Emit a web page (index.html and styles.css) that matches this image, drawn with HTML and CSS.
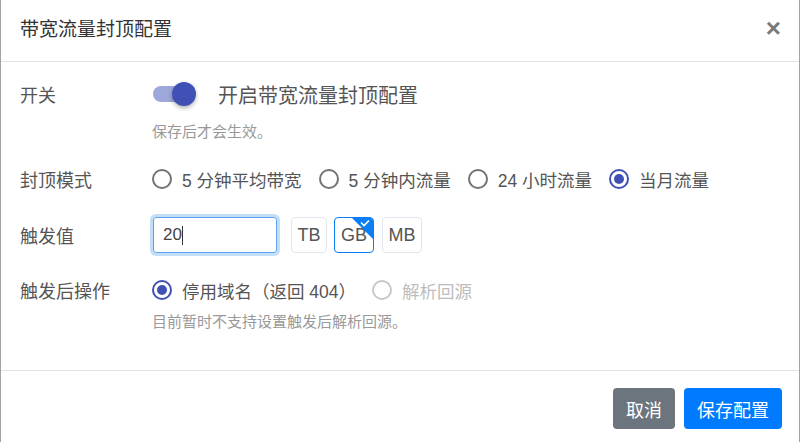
FILE: index.html
```html
<!DOCTYPE html>
<html lang="zh-CN">
<head>
    <meta charset="UTF-8">
    <title>带宽流量封顶配置</title>
    <link rel="stylesheet" href="styles.css">
</head>
<body>
    <div class="modal">
        <div class="modal-header">
            <h4 class="modal-title">带宽流量封顶配置</h4>
            <span class="close">&times;</span>
        </div>

        <div class="modal-body">
            <div class="row row-switch">
                <div class="label">开关</div>
                <div class="field">
                    <span class="switch"><span class="knob"></span></span>
                    <span class="switch-text">开启带宽流量封顶配置</span>
                </div>
            </div>
            <div class="hint hint-switch">保存后才会生效。</div>

            <div class="row row-mode">
                <div class="label">封顶模式</div>
                <div class="field">
                    <label class="radio"><span class="dot"></span>5 分钟平均带宽</label>
                    <label class="radio"><span class="dot"></span>5 分钟内流量</label>
                    <label class="radio"><span class="dot"></span>24 小时流量</label>
                    <label class="radio checked"><span class="dot"></span>当月流量</label>
                </div>
            </div>

            <div class="row row-value">
                <div class="label">触发值</div>
                <div class="field">
                    <div class="input">20<span class="caret"></span></div>
                    <span class="unit unit-tb">TB</span>
                    <span class="unit active">GB
                        <svg class="corner" width="21" height="21" viewBox="0 0 21 21">
                            <polygon points="0,0 21,0 21,21" fill="#0a7ff5"/>
                            <polyline points="9,4.5 12,7.5 17,2.5" fill="none" stroke="#fff" stroke-width="1.6"/>
                        </svg>
                    </span>
                    <span class="unit">MB</span>
                </div>
            </div>

            <div class="row row-action">
                <div class="label">触发后操作</div>
                <div class="field">
                    <label class="radio checked"><span class="dot"></span>停用域名（返回 404）</label>
                    <label class="radio disabled"><span class="dot"></span>解析回源</label>
                </div>
            </div>
            <div class="hint hint-action">目前暂时不支持设置触发后解析回源。</div>
        </div>

        <div class="modal-footer">
            <button class="btn btn-gray">取消</button>
            <button class="btn btn-blue">保存配置</button>
        </div>
    </div>
</body>
</html>
```

FILE: styles.css
```css
body {
    margin: 0;
    font-family: "Liberation Sans", "Noto Sans CJK SC", sans-serif;
    background-color: #ffffff;
    color: #555;
}

.modal {
    width: 800px;
    height: 442px;
    box-sizing: border-box;
    border-left: 1px solid #a3a3a3;
    border-right: 1px solid #a3a3a3;
    background-color: #fff;
}

.modal-header {
    height: 61px;
    border-bottom: 1px solid #e2e2e2;
    display: flex;
    align-items: center;
    justify-content: space-between;
    padding: 0 18px 0 19px;
}
.modal-title {
    margin: 0;
    font-size: 19px;
    font-weight: normal;
    color: #333;
    padding-bottom: 6px;
}
.close {
    font-size: 26px;
    font-weight: bold;
    color: #7a7a7a;
    padding-bottom: 4px;
}

.modal-body {
    height: 308px;
    box-sizing: border-box;
    padding: 16px 19px 0 19px;
}

.row {
    display: flex;
    align-items: center;
    height: 32px;
}
.label {
    width: 132px;
    flex-shrink: 0;
    font-size: 18px;
    color: #555;
}
.field {
    display: flex;
    align-items: center;
}

.hint {
    padding-left: 132px;
    font-size: 15px;
    line-height: 20px;
    color: #999;
}
.hint-switch { margin-top: 12px; }
.row-mode { margin-top: 21px; }
.row-value { margin-top: 22px; height: 36px; }
.row-action { margin-top: 21px; }
.hint-action { margin-top: 6px; }

/* switch */
.switch {
    position: relative;
    width: 34px;
    height: 16px;
    border-radius: 8px;
    background-color: #9ea7da;
    margin-left: 1px;
}
.knob {
    position: absolute;
    left: 19px;
    top: -4px;
    width: 24px;
    height: 24px;
    border-radius: 50%;
    background-color: #3f51b5;
    box-shadow: 0 2px 4px rgba(0, 0, 0, 0.3);
}
.switch-text {
    margin-left: 31px;
    font-size: 20px;
    color: #555;
}

/* radios */
.radio {
    display: flex;
    align-items: center;
    font-size: 17.5px;
    color: #555;
    margin-right: 17px;
}
.dot {
    width: 20px;
    height: 20px;
    box-sizing: border-box;
    border: 2px solid #737373;
    border-radius: 50%;
    margin-right: 10px;
    display: flex;
    align-items: center;
    justify-content: center;
}
.radio.checked .dot {
    border-color: #3f51b5;
}
.radio.checked .dot::after {
    content: "";
    width: 10px;
    height: 10px;
    border-radius: 50%;
    background-color: #3f51b5;
}
.radio.disabled { color: #bdbdbd; }
.radio.disabled .dot { border-color: #c8c8c8; }
.row-action .radio { margin-right: 16px; }

/* input + units */
.input {
    width: 124px;
    height: 36px;
    box-sizing: border-box;
    border: 1px solid #5aa4f0;
    border-radius: 3px;
    box-shadow: 0 0 0 3px #c4defa;
    padding-left: 9px;
    font-size: 17px;
    color: #444;
    display: flex;
    align-items: center;
    margin-left: 1px;
    margin-right: 14px;
}
.caret {
    width: 1px;
    height: 19px;
    background-color: #333;
}
.unit {
    position: relative;
    width: 40px;
    height: 36px;
    box-sizing: border-box;
    border: 1px solid #e1e6ee;
    border-radius: 4px;
    font-size: 18px;
    color: #555;
    display: flex;
    align-items: center;
    justify-content: center;
    margin-right: 8px;
    overflow: hidden;
}
.unit-tb {
    width: 36px;
    margin-right: 7px;
}
.unit.active {
    border-color: #0a7ff5;
}
.corner {
    position: absolute;
    top: 0;
    right: 0;
}

/* footer */
.modal-footer {
    border-top: 1px solid #e2e2e2;
    display: flex;
    justify-content: flex-end;
    padding: 17px 17px 0 0;
}
.btn {
    height: 41px;
    border: none;
    border-radius: 4px;
    color: #fff;
    font-family: "Liberation Sans", "Noto Sans CJK SC", sans-serif;
    font-size: 18px;
    padding: 0 13px;
    margin-left: 9px;
}
.btn-gray { background-color: #6c757d; }
.btn-blue { background-color: #007bff; }
```
